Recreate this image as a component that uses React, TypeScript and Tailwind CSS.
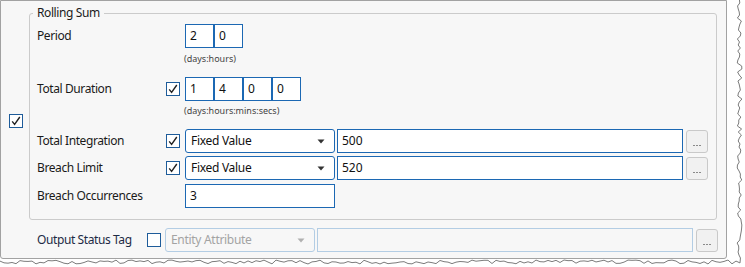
import React from 'react';

const font = { fontFamily: '"Noto Sans", "Open Sans", Arial, sans-serif' };

function CheckBox({ checked, className = '' }: { checked?: boolean; className?: string }) {
  return (
    <div className={`w-[14px] h-[14px] border border-[#1e5c9a] bg-white flex items-center justify-center shrink-0 ${className}`}>
      {checked && (
        <svg width="12" height="12" viewBox="0 0 12 12">
          <path d="M2.2 6.4 L4.6 9.4 L9.8 2" fill="none" stroke="#222" strokeWidth="1.4" />
        </svg>
      )}
    </div>
  );
}

function Box({ value }: { value: string }) {
  return (
    <div className="w-[29px] h-[24px] border border-[#1c68b3] bg-white pl-[4px] flex items-center text-[12px] text-[#111]">
      {value}
    </div>
  );
}

function Arrow({ color }: { color: string }) {
  return (
    <svg width="8" height="5" viewBox="0 0 8 5">
      <path d="M0.5 0.5 L7.5 0.5 L4 4.5 Z" fill={color} />
    </svg>
  );
}

function Select({ text, disabled }: { text: string; disabled?: boolean }) {
  return (
    <div
      className={`w-[150px] h-[24px] rounded-[3px] border flex items-center justify-between pl-[5px] pr-[9px] text-[12px] tracking-[-0.3px] shrink-0 ${
        disabled ? 'border-[#b3cde4] bg-[#f7f7f7] text-[#a3a3a3]' : 'border-[#1c68b3] bg-white text-[#111]'
      }`}
    >
      <span>{text}</span>
      <Arrow color={disabled ? '#b0b0b0' : '#333'} />
    </div>
  );
}

function TextInput({ value, disabled }: { value: string; disabled?: boolean }) {
  return (
    <div
      className={`flex-1 h-[24px] border flex items-center pl-[4px] text-[12px] ${
        disabled ? 'border-[#b3cde4] bg-[#f7f7f7]' : 'border-[#1c68b3] bg-white text-[#111]'
      }`}
    >
      {value}
    </div>
  );
}

function DotsButton({ className = '' }: { className?: string }) {
  return (
    <div className={`w-[22px] h-[23px] rounded-[3px] border border-[#c9c9c9] bg-[#f1f1f1] flex items-end justify-center pb-[6px] shrink-0 ${className}`}>
      <div className="flex gap-[1px]">
        <span className="w-[2px] h-[1px] bg-[#8a8a8a]" />
        <span className="w-[2px] h-[1px] bg-[#8a8a8a]" />
        <span className="w-[2px] h-[1px] bg-[#8a8a8a]" />
      </div>
    </div>
  );
}

function Row({ label, children, className = '' }: { label: string; children: React.ReactNode; className?: string }) {
  return (
    <div className={`flex items-center h-[24px] ${className}`}>
      <div className="w-[129px] text-[12px] tracking-[-0.4px] text-[#1a1a1a] shrink-0">{label}</div>
      {children}
    </div>
  );
}

function tornPoints() {
  const pts: string[] = [];
  let seed = 7;
  const rnd = () => {
    seed = (seed * 9301 + 49297) % 233280;
    return seed / 233280;
  };
  for (let y = 0; y <= 260; y += 3) pts.push(`${737 + rnd() * 5},${y}`);
  for (let x = 740; x >= 0; x -= 4) pts.push(`${x},${260 + rnd() * 4}`);
  return pts.join(' ');
}

export default function App() {
  const points = tornPoints();
  return (
    <div className="relative w-[745px] h-[267px] bg-white overflow-hidden" style={font}>
      <div className="w-[727px] h-[259px] border border-[#a2a2a2] rounded-b-[3px] bg-[#f7f7f7] flex">
        <div className="w-[28px] shrink-0 pl-[8px] pt-[113px]">
          <CheckBox checked />
        </div>
        <div className="flex-1 pr-[8px]">
          <fieldset className="w-[688px] border border-[#cbcbcb] rounded-[3px] mt-[4px] pl-[7px] pr-[8px] pb-[11px]">
            <legend className="ml-[-4px] px-[4px] text-[12px] leading-[16px] tracking-[-0.4px] text-[#1a1a1a]">Rolling Sum</legend>
            <Row label="Period" className="mt-[3px]">
              <div className="w-[19px]" />
              <div className="flex">
                <Box value="2" />
                <Box value="0" />
              </div>
            </Row>
            <div className="pl-[147px] mt-[5px] text-[9px] leading-[12px] text-[#444]">(days:hours)</div>
            <Row label="Total Duration" className="mt-[12px]">
              <CheckBox checked className="mr-[5px]" />
              <div className="flex">
                <Box value="1" />
                <Box value="4" />
                <Box value="0" />
                <Box value="0" />
              </div>
            </Row>
            <div className="pl-[147px] mt-[4px] text-[9px] leading-[12px] text-[#444]">(days:hours:mins:secs)</div>
            <Row label="Total Integration" className="mt-[12px]">
              <CheckBox checked className="mr-[5px]" />
              <Select text="Fixed Value" />
              <div className="flex-1 flex items-center gap-[2px] ml-[2px]">
                <TextInput value="500" />
                <DotsButton className="ml-[1px]" />
              </div>
            </Row>
            <Row label="Breach Limit" className="mt-[3px]">
              <CheckBox checked className="mr-[5px]" />
              <Select text="Fixed Value" />
              <div className="flex-1 flex items-center gap-[2px] ml-[2px]">
                <TextInput value="520" />
                <DotsButton className="ml-[1px]" />
              </div>
            </Row>
            <Row label="Breach Occurrences" className="mt-[4px]">
              <div className="w-[19px]" />
              <div className="w-[150px] h-[24px] border border-[#1c68b3] bg-white pl-[4px] flex items-center text-[12px] text-[#111]">3</div>
            </Row>
          </fieldset>
          <div className="flex items-center h-[24px] mt-[8px] pl-[8px]">
            <div className="w-[110px] text-[12px] tracking-[-0.4px] text-[#1d2b45] shrink-0">Output Status Tag</div>
            <CheckBox className="mr-[4px]" />
            <Select text="Entity Attribute" disabled />
            <div className="flex-1 flex items-center gap-[2px] ml-[2px]">
              <TextInput value="" disabled />
              <DotsButton className="ml-[1px]" />
            </div>
          </div>
        </div>
      </div>
      <svg className="absolute left-0 top-0" width="745" height="267">
        <polyline points={points} fill="none" stroke="#7c7c7c" strokeWidth="1" />
      </svg>
    </div>
  );
}
